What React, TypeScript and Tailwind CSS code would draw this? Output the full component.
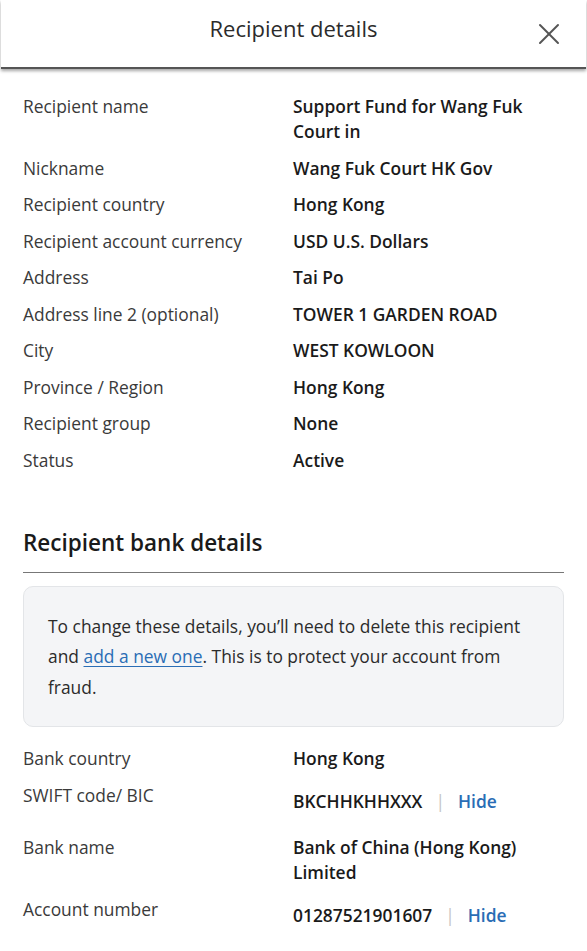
import React from "react";

const rows: [string, string[]][] = [
  ["Recipient name", ["Support Fund for Wang Fuk", "Court in"]],
  ["Nickname", ["Wang Fuk Court HK Gov"]],
  ["Recipient country", ["Hong Kong"]],
  ["Recipient account currency", ["USD U.S. Dollars"]],
  ["Address", ["Tai Po"]],
  ["Address line 2 (optional)", ["TOWER 1 GARDEN ROAD"]],
  ["City", ["WEST KOWLOON"]],
  ["Province / Region", ["Hong Kong"]],
  ["Recipient group", ["None"]],
  ["Status", ["Active"]],
];

function Row({ label, value, offset }: { label: string; value: React.ReactNode; offset?: boolean }) {
  return (
    <div className="flex">
      <div className="w-[270px] shrink-0 text-[#3a3a3a]">{label}</div>
      <div className={`flex-1 font-semibold text-[#1a1a1a] ${offset ? "pt-[6px]" : ""}`}>{value}</div>
    </div>
  );
}

function Hidden({ v }: { v: string }) {
  return (
    <span className="flex items-center">
      <span>{v}</span>
      <span className="mx-[13px] text-[#c4c4c4] font-normal">|</span>
      <span className="text-[#2a6db5]">Hide</span>
    </span>
  );
}

export default function App() {
  return (
    <div
      className="w-[587px] h-[951px] bg-white overflow-hidden text-[17.4px] leading-[25px]"
      style={{ fontFamily: '"Open Sans", sans-serif' }}
    >
      <div className="relative h-[69px] flex items-center justify-center border-b-[2px] border-[#555] shadow-[0_2px_3px_rgba(0,0,0,0.35)] mx-[1px]">
        <h1 className="text-[22px] text-[#2b2b2b] -mt-[11px]">Recipient details</h1>
        <svg
          className="absolute right-[26px] top-[23px]"
          width="22"
          height="22"
          viewBox="0 0 22 22"
          fill="none"
          stroke="#555"
          strokeWidth="2"
          strokeLinecap="round"
        >
          <line x1="2" y1="2" x2="20" y2="20" />
          <line x1="20" y1="2" x2="2" y2="20" />
        </svg>
      </div>

      <div className="px-[23px] pt-[25px]">
        <div className="flex flex-col gap-[11.5px]">
          {rows.map(([l, v]) => (
            <Row
              key={l}
              label={l}
              value={v.map((s, i) => (
                <div key={i}>{s}</div>
              ))}
            />
          ))}
        </div>

        <h2 className="mt-[55px] text-[22.5px] font-semibold text-[#1a1a1a] leading-[30px]">Recipient bank details</h2>
        <div className="mt-[14px] h-[1px] bg-[#777]" />

        <div className="mt-[13px] rounded-[10px] border border-[#e3e5e8] bg-[#f4f5f7] px-[24px] py-[24px] leading-[30.5px] text-[#2b2b2b]">
          To change these details, you’ll need to delete this recipient and{" "}
          <span className="text-[#2a6db5] underline underline-offset-[3px]">add a new one</span>. This is to protect your
          account from fraud.
        </div>

        <div className="mt-[19px] flex flex-col gap-[12px]">
          <Row label="Bank country" value="Hong Kong" />
          <Row label="SWIFT code/ BIC" value={<Hidden v="BKCHHKHHXXX" />} offset />
          <div className="mt-[9px]">
            <Row
              label="Bank name"
              value={
                <>
                  <div>Bank of China (Hong Kong)</div>
                  <div>Limited</div>
                </>
              }
            />
          </div>
          <Row label="Account number" value={<Hidden v="01287521901607" />} offset />
        </div>
      </div>
    </div>
  );
}
